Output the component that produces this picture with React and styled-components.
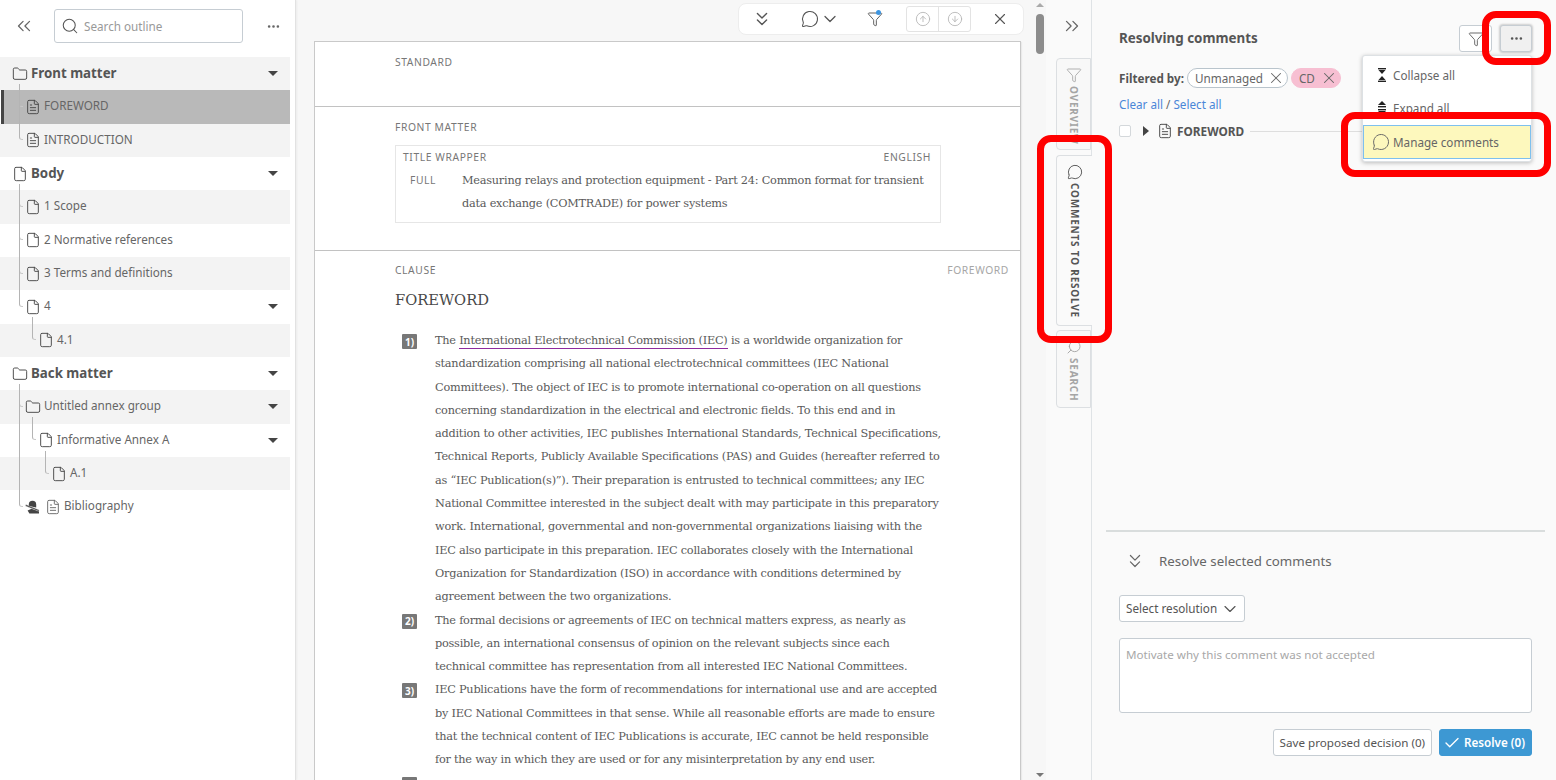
import styled, { createGlobalStyle } from "styled-components";
import {
  Check, ChevronDown, ChevronsDown, ChevronsLeft, ChevronsRight, CircleArrowDown, CircleArrowUp,
  Ellipsis, File, FileText, Folder, Funnel, MessageCircle, Search, X,
} from "lucide-react";

const GlobalStyle = createGlobalStyle`
  html, body { margin: 0; padding: 0; height: 100%; overflow: hidden; }
  body { font-family: "Noto Sans", "Open Sans", sans-serif; color: #555; background: #fff; }
  * { box-sizing: border-box; }
`;

const Screen = styled.div`
  position: relative;
  display: flex;
  width: 1556px;
  height: 780px;
  overflow: hidden;
`;

/* left outline */
const OutlinePane = styled.aside`
  width: 296px;
  flex: none;
  background: #fff;
  border-right: 1px solid #e2e2e2;
  box-shadow: 1px 0 2px rgba(0, 0, 0, 0.05);
  position: relative;
  z-index: 2;
`;

const OutlineTop = styled.div`
  height: 57px;
  padding: 9px 0 14px 13px;
  display: flex;
  align-items: center;
  color: #666;
`;

const SearchBox = styled.div`
  width: 189px;
  height: 34px;
  margin-left: 19px;
  margin-right: 23px;
  padding-left: 6px;
  display: flex;
  align-items: center;
  gap: 5px;
  border: 1px solid #c6cdd3;
  border-radius: 3px;
  font-size: 11.7px;
  color: #999;
`;

const OutlineList = styled.div`
  width: 290px;
`;

const Row = styled.div`
  position: relative;
  height: 33.33px;
  display: flex;
  align-items: center;
  gap: 3px;
  padding-left: ${(p) => 12 + p.$level * 13}px;
  padding-right: 12px;
  background: ${(p) => (p.$selected ? "#b9b9b9" : p.$shade ? "#f3f3f3" : "#fff")};
  border-left: ${(p) => (p.$selected ? "3px solid #444" : "none")};
  margin-left: ${(p) => (p.$selected ? "1px" : "0")};
  ${(p) => p.$selected && `padding-left: ${8 + p.$level * 13}px;`}
  color: #666;
  font-size: 11.7px;
  font-weight: 400;
  ${(p) => p.$bold && "font-size: 13.3px; font-weight: 700; color: #555;"}
`;

const RowLabel = styled.span`
  flex: 1;
  white-space: nowrap;
  margin-top: ${(p) => (p.$bold ? "-1px" : "-3px")};
`;

const Caret = styled.span`
  width: 0;
  height: 0;
  border-left: 5px solid transparent;
  border-right: 5px solid transparent;
  border-top: 5.5px solid #444;
`;

const Connector = styled.span`
  position: absolute;
  z-index: 1;
  left: ${(p) => 19 + (p.$level - 1) * 13 - (p.$selected ? 4 : 0)}px;
  bottom: 50%;
  width: 4px;
  height: ${(p) => p.$up}px;
  border-left: 1px solid #b4b4b4;
  border-bottom: 1px solid #c8c8c8;
  border-bottom-left-radius: 3px;
`;

/* centre document */
const DocPane = styled.main`
  flex: 1;
  position: relative;
  background: #f7f7f7;
  padding: 0 25px 0 18px;
  min-width: 0;
  overflow: hidden;
`;

const ToolBar = styled.div`
  width: 286px;
  height: 32px;
  margin: 3px -3px 6px auto;
  display: flex;
  align-items: center;
  background: #fff;
  border: 1px solid #ededed;
  border-radius: 8px;
  color: #555;
`;

const ToolSlot = styled.div`
  width: ${(p) => p.$w}px;
  padding-left: ${(p) => p.$pl || 0}px;
  flex: none;
  display: flex;
  align-items: center;
  justify-content: center;
  position: relative;
`;

const NotifyDot = styled.span`
  position: absolute;
  top: -1px;
  left: 31px;
  width: 5px;
  height: 5px;
  border-radius: 50%;
  background: #3d95e0;
`;

const ArrowGroup = styled.div`
  width: 65px;
  height: 26px;
  display: flex;
  border: 1px solid #e3e3e3;
  border-radius: 3px;
  color: #b5b5b5;
`;

const ArrowCell = styled.div`
  flex: 1;
  display: flex;
  align-items: center;
  justify-content: center;
  & + & { border-left: 1px solid #e3e3e3; }
`;

const Paper = styled.div`
  background: #fff;
  border: 1px solid #c9c9c9;
  box-shadow: 1px 1px 1px rgba(0, 0, 0, 0.05);
  width: 707px;
`;

const Section = styled.section`
  padding: ${(p) => p.$pad};
  padding-left: 80px;
  padding-right: 11px;
  border-top: ${(p) => (p.$first ? "none" : "1px solid #c2c2c2")};
`;

const KindLabel = styled.div`
  display: flex;
  justify-content: space-between;
  font-size: 10.3px;
  line-height: 14px;
  letter-spacing: 0.6px;
  color: #777;
`;

const FaintLabel = styled.span`
  color: #a6a6a6;
`;

const TitleBox = styled.div`
  width: 546px;
  height: 78px;
  margin-top: 11px;
  padding: 4px 9px 0 7px;
  border: 1px solid #e6e6e6;
`;

const TitleRow = styled.div`
  display: flex;
  padding-left: 7px;
  margin-top: 5px;
`;

const TitleKind = styled.div`
  width: 52px;
  flex: none;
  font-size: 10.3px;
  line-height: 23.3px;
  letter-spacing: 0.6px;
  color: #777;
`;

const SerifLine = styled.div`
  font-family: "DejaVu Serif", "Liberation Serif", serif;
  font-size: 11.3px;
  letter-spacing: -0.24px;
  line-height: 23.3px;
  color: #5a5a5a;
  white-space: nowrap;
`;

const Heading = styled.h2`
  margin: 11px 0 17px;
  font-family: "DejaVu Serif", "Liberation Serif", serif;
  font-size: 14.7px;
  line-height: 24px;
  font-weight: 400;
  color: #484848;
`;

const ListItem = styled.div`
  display: flex;
  margin-left: 7px;
`;

const Badge = styled.span`
  width: 15px;
  height: 15px;
  margin-top: 5px;
  margin-right: 18px;
  flex: none;
  display: flex;
  align-items: center;
  justify-content: center;
  background: #777;
  border-radius: 1px;
  color: #fff;
  font-size: 10px;
  font-weight: 700;
`;

const Commented = styled.span`
  padding-bottom: 1px;
  border-bottom: 1.5px solid #8e2a9e;
`;

/* scrollbar */
const ScrollTrack = styled.div`
  position: absolute;
  top: 0;
  right: 0;
  bottom: 0;
  width: 10px;
  background: #f7f7f7;
`;

const ScrollThumb = styled.div`
  position: absolute;
  top: 14px;
  left: 0;
  width: 8px;
  height: 40px;
  border-radius: 4px;
  background: #8c8c8c;
`;

const ScrollArrow = styled.span`
  position: absolute;
  left: 0;
  ${(p) => (p.$down ? "bottom: 3px;" : "top: 3px;")}
  width: 0;
  height: 0;
  border-left: 4px solid transparent;
  border-right: 4px solid transparent;
  ${(p) => (p.$down ? "border-top: 4px solid #777;" : "border-bottom: 4px solid #aaa;")}
`;

/* tab strip */
const TabStrip = styled.nav`
  width: 46px;
  flex: none;
  background: #fafafa;
  border-right: 1px solid #dfe3e6;
  padding-left: 10px;
  color: #666;
`;

const StripToggle = styled.div`
  height: 58px;
  padding: 15px 0 0 5px;
`;

const Tab = styled.div`
  height: ${(p) => p.$h}px;
  margin-bottom: ${(p) => p.$mb}px;
  padding-top: 8px;
  width: ${(p) => (p.$active ? "36px" : "35px")};
  display: flex;
  flex-direction: column;
  align-items: center;
  gap: 3px;
  background: ${(p) => (p.$active ? "#fafafa" : "#f8f8f8")};
  border: 1px solid #dcdfe2;
  border-right: ${(p) => (p.$active ? "none" : "1px solid #dcdfe2")};
  border-radius: 4px 0 0 4px;
  color: ${(p) => (p.$active ? "#555" : "#a5a5a5")};
`;

const TabText = styled.span`
  writing-mode: vertical-rl;
  font-size: 10px;
  font-weight: 700;
  letter-spacing: 0.8px;
  white-space: nowrap;
`;

/* right panel */
const ResolvePane = styled.aside`
  width: 464px;
  flex: none;
  display: flex;
  flex-direction: column;
  background: #fafafa;
`;

const ResolveTop = styled.div`
  flex: 1;
  padding: 25px 24px 0 27px;
  min-height: 0;
`;

const TitleBar = styled.div`
  height: 27px;
  display: flex;
  align-items: center;
  gap: 8px;
`;

const PanelTitle = styled.div`
  flex: 1;
  padding-bottom: 2px;
  font-size: 13.4px;
  font-weight: 700;
  color: #555;
`;

const IconButton = styled.div`
  width: ${(p) => (p.$pressed ? "32px" : "33px")};
  height: 27px;
  display: flex;
  align-items: center;
  justify-content: center;
  background: ${(p) => (p.$pressed ? "#f0f0f0" : "#fff")};
  border: 1px solid #c6cdd3;
  border-radius: 3px;
  color: #555;
  ${(p) => p.$pressed && "box-shadow: 0 0 2px 1px rgba(0,0,0,.18);"}
`;

const FilterRow = styled.div`
  height: 20px;
  margin-top: 16px;
  display: flex;
  align-items: center;
  gap: 3px;
  font-size: 11.7px;
`;

const FilterCaption = styled.b`
  color: #555;
  font-weight: 700;
`;

const Chip = styled.span`
  height: 20px;
  padding: 0 2px 0 7px;
  display: flex;
  align-items: center;
  justify-content: space-between;
  width: ${(p) => p.$w}px;
  border: 1px solid ${(p) => (p.$pink ? "#f7bfd2" : "#b9c4cc")};
  border-radius: 10px;
  background: ${(p) => (p.$pink ? "#f7bfd2" : "#fff")};
  color: #666;
  font-size: 11.7px;
`;

const LinkRow = styled.div`
  margin-top: 8px;
  font-size: 11.7px;
  line-height: 17px;
  color: #666;
`;

const BlueLink = styled.a`
  color: #4a86d8;
`;

const GroupRow = styled.div`
  height: 20px;
  margin-top: 8px;
  display: flex;
  align-items: center;
  font-size: 11.8px;
  font-weight: 700;
  color: #555;
`;

const Tick = styled.span`
  width: 12px;
  height: 12px;
  margin-right: 12px;
  background: #fff;
  border: 1px solid #d4d8db;
  border-radius: 2px;
`;

const SideCaret = styled.span`
  width: 0;
  height: 0;
  margin-right: 8px;
  border-top: 5px solid transparent;
  border-bottom: 5px solid transparent;
  border-left: 6px solid #444;
`;

const GroupLine = styled.span`
  flex: 1;
  height: 1px;
  margin-left: 6px;
  background: #dedede;
`;

const ResolveBottom = styled.div`
  margin: 0 11px 0 14px;
  height: 250px;
  padding: 0 13px 0 13px;
  border-top: 2px solid #d9dddd;
`;

const ResolveHead = styled.div`
  height: 58px;
  padding: 0 0 0 5px;
  display: flex;
  align-items: center;
  gap: 13px;
  font-size: 13.3px;
  color: #666;
`;

const SelectBox = styled.div`
  width: 126px;
  height: 27px;
  margin-top: 5px;
  display: flex;
  align-items: center;
  gap: 3px;
  padding: 0 0 2px 6px;
  background: #fff;
  border: 1px solid #c6cdd3;
  border-radius: 3px;
  font-size: 11.7px;
  color: #555;
`;

const MotivateBox = styled.div`
  height: 75px;
  margin-top: 16px;
  padding: 7px 6px;
  background: #fff;
  border: 1px solid #c6cdd3;
  border-radius: 3px;
  font-size: 11.6px;
  line-height: 18px;
  color: #a8a8a8;
`;

const ActionRow = styled.div`
  margin-top: 16px;
  display: flex;
  justify-content: flex-end;
  gap: 7px;
`;

const ActionButton = styled.div`
  height: 27px;
  padding: 0 6px 0 ${(p) => (p.$primary ? "3px" : "6px")};
  display: flex;
  align-items: center;
  gap: 3px;
  white-space: nowrap;
  font-size: 11.65px;
  border-radius: 3px;
  border: 1px solid ${(p) => (p.$primary ? "#3d98d3" : "#c6cdd3")};
  background: ${(p) => (p.$primary ? "#3d98d3" : "#fff")};
  color: ${(p) => (p.$primary ? "#fff" : "#555")};
  font-weight: ${(p) => (p.$primary ? 600 : 400)};
`;

/* dropdown + annotations, these lie over the page */
const Menu = styled.div`
  position: absolute;
  z-index: 5;
  top: 55px;
  left: 1362px;
  width: 170px;
  height: 107px;
  padding: 2px 1px;
  background: #fff;
  border: 1px solid #dde1e4;
  border-radius: 3px;
  box-shadow: 0 1px 4px rgba(0, 0, 0, 0.25);
`;

const MenuItem = styled.div`
  height: ${(p) => (p.$active ? "32px" : "33px")};
  margin-top: ${(p) => (p.$active ? "2px" : "0")};
  display: flex;
  align-items: center;
  gap: 5px;
  padding-left: 12px;
  font-size: 11.7px;
  color: #666;
  ${(p) => p.$active && "background: #fdf8bd; outline: 1px solid #7ec0ee;"}
`;

const RedBox = styled.div`
  position: absolute;
  z-index: 6;
  left: ${(p) => p.$x}px;
  top: ${(p) => p.$y}px;
  width: ${(p) => p.$w}px;
  height: ${(p) => p.$h}px;
  border: 7px solid #f00;
  border-radius: 14px;
  pointer-events: none;
`;

const CollapseGlyph = ({ expand }) => (
  <svg width="12" height="14" viewBox="0 0 12 14" fill="#222" aria-hidden="true">
    {expand ? (
      <>
        <path d="M6 0 10 4H2z" />
        <rect x="2" y="5" width="8" height="1.4" />
        <rect x="2" y="8" width="8" height="1.4" />
        <path d="M2 10h8l-4 4z" />
      </>
    ) : (
      <>
        <rect x="2" y="0" width="8" height="1.4" />
        <path d="M2.5 2h7L6 6z" />
        <path d="M6 8l3.5 4h-7z" />
        <rect x="2" y="12.6" width="8" height="1.4" />
      </>
    )}
  </svg>
);

const UnsyncedGlyph = () => (
  <svg width="15" height="14" viewBox="0 0 15 14" fill="#444" aria-hidden="true" style={{ flex: "none" }}>
    <path d="M3.8 6V4.4a3.7 3.7 0 0 1 7.4 0V7.6z" />
    <path d="M4.4 13.4 2.6 10.6l4-1.8 7.4 2.4v2.2z" />
    <path d="M.9 4.6 14.2 10l-.5 1.3L.4 5.9z" stroke="#fff" strokeWidth="0.3" />
  </svg>
);

const outline = [
  { label: "Front matter", icon: "folder", level: 0, bold: true, caret: true, shade: true },
  { label: "FOREWORD", icon: "doc", level: 1, up: 23, selected: true },
  { label: "INTRODUCTION", icon: "doc", level: 1, up: 56, shade: true },
  { label: "Body", icon: "file", level: 0, bold: true, caret: true },
  { label: "1 Scope", icon: "file", level: 1, up: 23, shade: true },
  { label: "2 Normative references", icon: "file", level: 1, up: 56 },
  { label: "3 Terms and definitions", icon: "file", level: 1, up: 89, shade: true },
  { label: "4", icon: "file", level: 1, up: 122, caret: true },
  { label: "4.1", icon: "file", level: 2, up: 23, shade: true },
  { label: "Back matter", icon: "folder", level: 0, bold: true, caret: true },
  { label: "Untitled annex group", icon: "folder", level: 1, up: 23, caret: true, shade: true },
  { label: "Informative Annex A", icon: "file", level: 2, up: 23, caret: true },
  { label: "A.1", icon: "file", level: 3, up: 23, shade: true },
  { label: "Bibliography", icon: "biblio", level: 1, up: 122 },
];

const clause1 = [
  "standardization comprising all national electrotechnical committees (IEC National",
  "Committees). The object of IEC is to promote international co-operation on all questions",
  "concerning standardization in the electrical and electronic fields. To this end and in",
  "addition to other activities, IEC publishes International Standards, Technical Specifications,",
  "Technical Reports, Publicly Available Specifications (PAS) and Guides (hereafter referred to",
  "as “IEC Publication(s)”). Their preparation is entrusted to technical committees; any IEC",
  "National Committee interested in the subject dealt with may participate in this preparatory",
  "work. International, governmental and non-governmental organizations liaising with the",
  "IEC also participate in this preparation. IEC collaborates closely with the International",
  "Organization for Standardization (ISO) in accordance with conditions determined by",
  "agreement between the two organizations.",
];

const clause2 = [
  "The formal decisions or agreements of IEC on technical matters express, as nearly as",
  "possible, an international consensus of opinion on the relevant subjects since each",
  "technical committee has representation from all interested IEC National Committees.",
];

const clause3 = [
  "IEC Publications have the form of recommendations for international use and are accepted",
  "by IEC National Committees in that sense. While all reasonable efforts are made to ensure",
  "that the technical content of IEC Publications is accurate, IEC cannot be held responsible",
  "for the way in which they are used or for any misinterpretation by any end user.",
];

const rowIcon = (icon) => {
  const size = { size: 16, strokeWidth: 1.4, color: "#444", style: { flex: "none" } };
  if (icon === "folder") return <Folder {...size} />;
  if (icon === "doc") return <FileText {...size} />;
  if (icon === "biblio")
    return (
      <>
        <UnsyncedGlyph />
        <FileText {...size} color="#666" style={{ flex: "none", marginLeft: 2 }} />
      </>
    );
  return <File {...size} />;
};

function App() {
  return (
    <Screen>
      <GlobalStyle />
      <OutlinePane>
        <OutlineTop>
          <ChevronsLeft size={22} strokeWidth={1.4} />
          <SearchBox>
            <Search size={18} strokeWidth={1.4} color="#555" />
            Search outline
          </SearchBox>
          <Ellipsis size={15} strokeWidth={2.2} />
        </OutlineTop>
        <OutlineList>
          {outline.map((r) => (
            <Row key={r.label} $level={r.level} $bold={r.bold} $shade={r.shade} $selected={r.selected}>
              {r.up && <Connector $level={r.level} $up={r.up} $selected={r.selected} />}
              {rowIcon(r.icon)}
              <RowLabel $bold={r.bold}>{r.label}</RowLabel>
              {r.caret && <Caret />}
            </Row>
          ))}
        </OutlineList>
      </OutlinePane>

      <DocPane>
        <ToolBar>
          <ToolSlot $w={45}><ChevronsDown size={22} strokeWidth={1.5} /></ToolSlot>
          <ToolSlot $w={61} $pl={11}>
            <MessageCircle size={18} strokeWidth={1.4} />
            <ChevronDown size={20} strokeWidth={1.5} style={{ marginLeft: 1 }} />
          </ToolSlot>
          <ToolSlot $w={59}>
            <Funnel size={16} strokeWidth={1.4} />
            <NotifyDot />
          </ToolSlot>
          <ToolSlot $w={67} $pl={2}>
            <ArrowGroup>
              <ArrowCell><CircleArrowUp size={16} strokeWidth={1.3} /></ArrowCell>
              <ArrowCell><CircleArrowDown size={16} strokeWidth={1.3} /></ArrowCell>
            </ArrowGroup>
          </ToolSlot>
          <ToolSlot $w={52} $pl={6}><X size={18} strokeWidth={1.5} /></ToolSlot>
        </ToolBar>

        <Paper>
          <Section $first $pad="13px 0 37px">
            <KindLabel>STANDARD</KindLabel>
          </Section>
          <Section $pad="13px 0 27px">
            <KindLabel>FRONT MATTER</KindLabel>
            <TitleBox>
              <KindLabel>
                <span>TITLE WRAPPER</span>
                <span>ENGLISH</span>
              </KindLabel>
              <TitleRow>
                <TitleKind>FULL</TitleKind>
                <div>
                  <SerifLine>Measuring relays and protection equipment - Part 24: Common format for transient</SerifLine>
                  <SerifLine>data exchange (COMTRADE) for power systems</SerifLine>
                </div>
              </TitleRow>
            </TitleBox>
          </Section>
          <Section $pad="12px 0 0">
            <KindLabel>
              <span>CLAUSE</span>
              <FaintLabel>FOREWORD</FaintLabel>
            </KindLabel>
            <Heading>FOREWORD</Heading>
            <ListItem>
              <Badge>1)</Badge>
              <div>
                <SerifLine>
                  The <Commented>International Electrotechnical Commission (IEC)</Commented> is a worldwide organization for
                </SerifLine>
                {clause1.map((l) => <SerifLine key={l}>{l}</SerifLine>)}
              </div>
            </ListItem>
            <ListItem>
              <Badge>2)</Badge>
              <div>{clause2.map((l) => <SerifLine key={l}>{l}</SerifLine>)}</div>
            </ListItem>
            <ListItem>
              <Badge>3)</Badge>
              <div>{clause3.map((l) => <SerifLine key={l}>{l}</SerifLine>)}</div>
            </ListItem>
            <ListItem>
              <Badge />
            </ListItem>
          </Section>
        </Paper>

        <ScrollTrack>
          <ScrollArrow />
          <ScrollThumb />
          <ScrollArrow $down />
        </ScrollTrack>
      </DocPane>

      <TabStrip>
        <StripToggle><ChevronsRight size={22} strokeWidth={1.4} /></StripToggle>
        <Tab $h={92} $mb={5}>
          <Funnel size={16} strokeWidth={1.3} />
          <TabText>OVERVIEW</TabText>
        </Tab>
        <Tab $active $h={171} $mb={4}>
          <MessageCircle size={16} strokeWidth={1.4} />
          <TabText>COMMENTS TO RESOLVE</TabText>
        </Tab>
        <Tab $h={78} $mb={0}>
          <Search size={16} strokeWidth={1.4} style={{ transform: "scaleX(-1)" }} />
          <TabText>SEARCH</TabText>
        </Tab>
      </TabStrip>

      <ResolvePane>
        <ResolveTop>
          <TitleBar>
            <PanelTitle>Resolving comments</PanelTitle>
            <IconButton><Funnel size={16} strokeWidth={1.3} /></IconButton>
            <IconButton $pressed><Ellipsis size={15} strokeWidth={2.2} /></IconButton>
          </TitleBar>
          <FilterRow>
            <FilterCaption>Filtered by:</FilterCaption>
            <Chip $w={101}>Unmanaged <X size={18} strokeWidth={1.4} /></Chip>
            <Chip $w={50} $pink>CD <X size={18} strokeWidth={1.4} /></Chip>
          </FilterRow>
          <LinkRow>
            <BlueLink>Clear all</BlueLink> / <BlueLink>Select all</BlueLink>
          </LinkRow>
          <GroupRow>
            <Tick />
            <SideCaret />
            <FileText size={16} strokeWidth={1.4} color="#444" style={{ marginRight: 4 }} />
            FOREWORD
            <GroupLine />
          </GroupRow>
        </ResolveTop>
        <ResolveBottom>
          <ResolveHead>
            <ChevronsDown size={22} strokeWidth={1.3} />
            Resolve selected comments
          </ResolveHead>
          <SelectBox>
            Select resolution
            <ChevronDown size={20} strokeWidth={1.4} style={{ marginTop: 2 }} />
          </SelectBox>
          <MotivateBox>Motivate why this comment was not accepted</MotivateBox>
          <ActionRow>
            <ActionButton>Save proposed decision (0)</ActionButton>
            <ActionButton $primary><Check size={18} strokeWidth={1.8} />Resolve (0)</ActionButton>
          </ActionRow>
        </ResolveBottom>
      </ResolvePane>

      <Menu>
        <MenuItem><CollapseGlyph />Collapse all</MenuItem>
        <MenuItem><CollapseGlyph expand />Expand all</MenuItem>
        <MenuItem $active>
          <MessageCircle size={18} strokeWidth={1.3} style={{ marginLeft: -4, marginRight: -2 }} />
          Manage comments
        </MenuItem>
      </Menu>

      <RedBox $x={1037} $y={135} $w={75} $h={208} />
      <RedBox $x={1482} $y={11} $w={69} $h={54} />
      <RedBox $x={1341} $y={112} $w={210} $h={65} />
    </Screen>
  );
}

export default App;
